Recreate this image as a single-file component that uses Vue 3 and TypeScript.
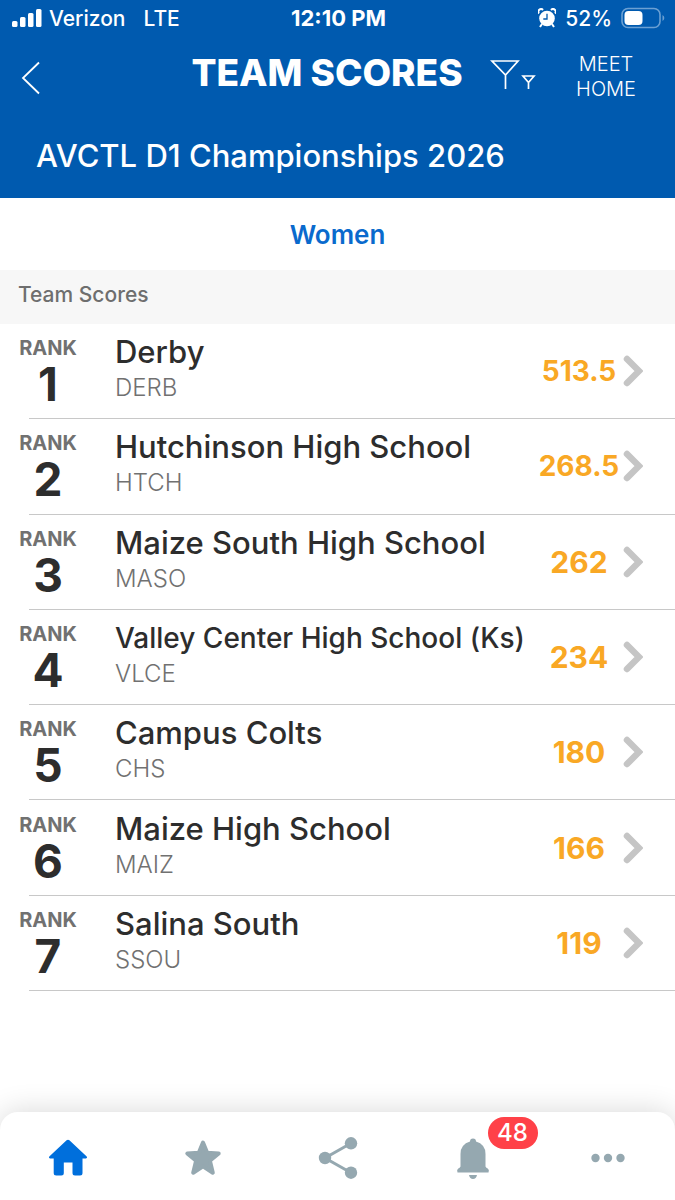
<script setup lang="ts">
interface Team {
  rank: number
  name: string
  code: string
  score: string
}

const teams: Team[] = [
  { rank: 1, name: 'Derby', code: 'DERB', score: '513.5' },
  { rank: 2, name: 'Hutchinson High School', code: 'HTCH', score: '268.5' },
  { rank: 3, name: 'Maize South High School', code: 'MASO', score: '262' },
  { rank: 4, name: 'Valley Center High School (Ks)', code: 'VLCE', score: '234' },
  { rank: 5, name: 'Campus Colts', code: 'CHS', score: '180' },
  { rank: 6, name: 'Maize High School', code: 'MAIZ', score: '166' },
  { rank: 7, name: 'Salina South', code: 'SSOU', score: '119' },
]
const unread = 48
</script>

<template>
  <div class="screen">
    <header class="header">
      <div class="status">
        <div class="status-side">
          <svg class="signal" width="30" height="20" viewBox="0 0 30 20" fill="#fff" aria-hidden="true">
            <rect x="0" y="13" width="5.500" height="6" rx="1.500" />
            <rect x="8" y="9" width="5.500" height="10" rx="1.500" />
            <rect x="16" y="5" width="5.500" height="14" rx="1.500" />
            <rect x="24" y="1" width="5.500" height="18" rx="1.500" />
          </svg>
          <span>Verizon</span>
          <span class="network">LTE</span>
        </div>
        <time class="clock">12:10 PM</time>
        <div class="status-side right">
          <svg width="18" height="20" viewBox="0 0 18 20" aria-hidden="true">
            <path d="M1 5.500a2.500 2.500 0 0 1 4-3.500M17 5.500A2.500 2.500 0 0 0 13 2" fill="none" stroke="#fff" stroke-width="2" />
            <path d="M4 16l-2 3M14 16l2 3" stroke="#fff" stroke-width="2" />
            <circle cx="9" cy="10.500" r="7.800" fill="#fff" />
            <path d="M9 5.800V11H5.300" fill="none" stroke="#005aaf" stroke-width="1.300" />
          </svg>
          <span class="percent">52%</span>
          <svg width="44" height="22" viewBox="0 0 44 22" aria-hidden="true">
            <rect x="1" y="1.500" width="38" height="19" rx="6" fill="none" stroke="#6ba0d3" stroke-width="1.600" />
            <rect x="3.500" y="4" width="18" height="14" rx="4" fill="#fff" />
            <path d="M41.500 8v6q1.800-1 1.800-3t-1.800-3" fill="#6ba0d3" />
          </svg>
        </div>
      </div>

      <div class="title-bar">
        <button class="icon-button back" type="button" aria-label="Back">
          <svg width="20" height="34" viewBox="0 0 20 34" fill="none" stroke="#fff" stroke-width="1.800">
            <path d="M18 1.500 2 17l16 15.500" />
          </svg>
        </button>
        <h1 class="title">TEAM SCORES</h1>
        <button class="icon-button filter" type="button" aria-label="Filter">
          <svg width="46" height="32" viewBox="0 0 46 32" fill="none" stroke="#fff" stroke-width="1.700">
            <path d="M2 2h26L15.500 16zM15.500 16v14" />
            <path d="M33 17h11l-5.500 6.500zM38.500 23.500V30" />
          </svg>
        </button>
        <a class="meet-home" href="#home">MEET<br>HOME</a>
      </div>

      <p class="meet">AVCTL D1 Championships 2026</p>
    </header>

    <main class="content">
      <button class="group" type="button">Women</button>
      <h2 class="section">Team Scores</h2>
      <ol class="list">
        <li v-for="team in teams" :key="team.rank" class="item">
          <a class="team" :href="'#' + team.code">
            <span class="rank">
              <span class="rank-label">RANK</span>
              <span class="rank-number">{{ team.rank }}</span>
            </span>
            <span class="details">
              <span class="name" :class="{ long: team.name.length > 26 }">{{ team.name }}</span>
              <span class="code">{{ team.code }}</span>
            </span>
            <span class="score" :class="{ decimal: team.score.includes('.') }">{{ team.score }}</span>
            <svg width="20" height="32" viewBox="0 0 20 32" fill="none" stroke="#c5c5c5" stroke-width="6.500" stroke-linecap="round" aria-hidden="true">
              <path d="M4 4l12 12L4 28" />
            </svg>
          </a>
        </li>
      </ol>
    </main>

    <nav class="tabs" aria-label="Main">
      <a class="tab active" href="#main" aria-label="Home" aria-current="page">
        <svg width="40" height="44" viewBox="0 0 40 44" fill="currentColor">
          <path d="M18.600 4.300q1.400-1.200 2.800 0L38.700 20.500q1.100 1.700-.7 1.900H34.500V37q0 2.500-2.500 2.500h-5q-2.500 0-2.500-2.500V26.500H15.800V37q0 2.500-2.500 2.500H8.200q-2.500 0-2.500-2.500V22.400H2q-1.800-.2-.7-1.900z" />
        </svg>
      </a>
      <a class="tab" href="#favorites" aria-label="Favorites">
        <svg width="40" height="44" viewBox="0 0 40 44" fill="currentColor" stroke="currentColor" stroke-width="4" stroke-linejoin="round">
          <path d="M20 6.500l4.200 10.200 11.500.8-8.800 7.200 2.900 12-9.800-6.300-9.800 6.300 2.900-12-8.800-7.200 11.500-.8z" />
        </svg>
      </a>
      <a class="tab" href="#share" aria-label="Share">
        <svg width="40" height="44" viewBox="0 0 40 44" fill="currentColor">
          <path d="M33 7.300 7 22l26 14.700" fill="none" stroke="currentColor" stroke-width="3" />
          <circle cx="7" cy="22" r="6.200" />
          <circle cx="33" cy="7.300" r="6.200" />
          <circle cx="33" cy="36.700" r="6.200" />
        </svg>
      </a>
      <a class="tab" href="#notifications" aria-label="Notifications">
        <span class="bell">
          <svg width="40" height="44" viewBox="0 0 40 44" fill="currentColor">
            <path d="M17 5.600a3 3 0 0 1 6 0Q32.500 8.500 32.500 18v12.500q0 1 2.500 2.200 1.500 1.200.5 3.800h-31q-1-2.600.5-3.800 2.500-1.200 2.500-2.200V18Q7.500 8.500 17 5.600zM16 39h8q-.8 4-4 4t-4-4z" />
          </svg>
          <span class="badge">{{ unread }}</span>
        </span>
      </a>
      <a class="tab" href="#more" aria-label="More">
        <svg width="40" height="44" viewBox="0 0 40 44" fill="currentColor">
          <circle cx="7.500" cy="22" r="4.200" />
          <circle cx="20" cy="22" r="4.200" />
          <circle cx="32.500" cy="22" r="4.200" />
        </svg>
      </a>
    </nav>
  </div>
</template>

<style>
body {
  margin: 0;
}
</style>

<style scoped>
.screen {
  display: flex;
  flex-direction: column;
  min-height: 100vh;
  background: #fff;
  color: #2d2d2d;
  font-family: Inter, "Liberation Sans", sans-serif;
}
a {
  color: inherit;
  text-decoration: none;
}
button {
  border: 0;
  padding: 0;
  background: none;
  font: inherit;
}
svg {
  display: block;
  flex: none;
}
.header {
  background: #005aaf;
  color: #fff;
}
.status {
  display: flex;
  align-items: center;
  height: 36px;
  padding: 0 10px 0 12px;
  font-size: 21px;
  font-weight: 500;
}
.status-side {
  display: flex;
  flex: 1;
  align-items: center;
}
.signal {
  margin-right: 7px;
}
.network {
  margin-left: 18px;
}
.clock {
  font-size: 22px;
  font-weight: 700;
}
.right {
  justify-content: flex-end;
}
.percent {
  margin: 0 9px;
}
.title-bar {
  display: flex;
  align-items: center;
  height: 82px;
}
.icon-button {
  display: block;
  flex: none;
}
.back {
  width: 100px;
  padding: 2px 0 0 21px;
}
.title {
  flex: 1;
  margin: 0;
  padding: 0 0 8px 84px;
  text-align: center;
  font-size: 37px;
  line-height: 44px;
  font-weight: 800;
  white-space: nowrap;
}
.filter {
  margin: 0 40px 4px 20px;
}
.meet-home {
  padding-right: 39px;
  text-align: center;
  font-size: 20px;
  line-height: 25px;
  font-weight: 300;
}
.meet {
  margin: 0;
  padding: 18px 36px 22px;
  font-size: 31px;
  line-height: 40px;
  font-weight: 500;
}
.content {
  display: flex;
  flex: 1;
  flex-direction: column;
  padding-bottom: 121px;
}
.group {
  height: 72px;
  color: #0a6acd;
  font-size: 26px;
  font-weight: 600;
}
.section {
  margin: 0;
  padding: 10px 18px 14px;
  background: #f7f7f7;
  color: #6e6e6e;
  font-size: 21px;
  line-height: 30px;
  font-weight: 500;
}
.list {
  display: grid;
  flex: 1;
  grid-auto-rows: 1fr;
  margin: 0;
  padding: 0;
  list-style: none;
}
.item {
  display: flex;
  flex-direction: column;
}
.item::after {
  height: 1px;
  margin-left: 29px;
  background: #c8c8c8;
  content: "";
}
.team {
  display: flex;
  flex: 1;
  align-items: center;
  padding: 0 32px 0 18px;
}
.rank {
  display: flex;
  flex: none;
  flex-direction: column;
  align-items: center;
  width: 60px;
  margin-right: 37px;
}
.rank-label {
  color: #717171;
  font-size: 20px;
  line-height: 26px;
  font-weight: 700;
}
.rank-number {
  font-size: 46px;
  line-height: 46px;
  font-weight: 700;
}
.details {
  display: flex;
  flex: 1;
  flex-direction: column;
  min-width: 0;
  padding-bottom: 6px;
}
.name {
  font-size: 31px;
  line-height: 40px;
  font-weight: 500;
  white-space: nowrap;
}
.long {
  font-size: 28px;
}
.code {
  color: #717171;
  font-size: 24px;
  line-height: 32px;
  font-weight: 300;
}
.score {
  flex: none;
  width: 88px;
  text-align: center;
  color: #f9a825;
  font-size: 30px;
  font-weight: 700;
}
.decimal {
  font-size: 28px;
}
.tabs {
  display: flex;
  align-items: center;
  height: 88px;
  border-radius: 18px 18px 0 0;
  background: #fff;
  box-shadow: 0 0 30px rgba(0, 0, 0, 0.16);
}
.tab {
  display: flex;
  flex: 1;
  justify-content: center;
  padding-top: 4px;
  color: #95a8b0;
}
.active {
  color: #006fdc;
}
.bell {
  position: relative;
}
.badge {
  position: absolute;
  top: -19px;
  left: 35px;
  min-width: 50px;
  border-radius: 16px;
  background: #ff4148;
  color: #fff;
  text-align: center;
  font-size: 24px;
  line-height: 32px;
  font-weight: 500;
}
</style>
